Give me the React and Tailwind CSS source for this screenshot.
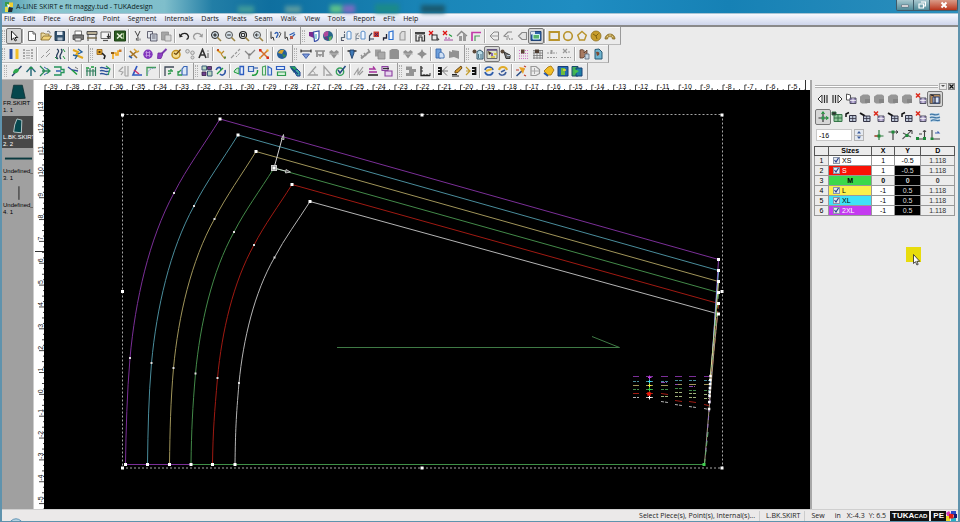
import { useState } from "react";

const GRAY = "#8e8e8e";
const BLUE = "#2f5fb3";
const GREEN = "#1d9a3c";
const GOLD = "#b8932c";

const menus = [
  "File", "Edit", "Piece", "Grading", "Point", "Segment", "Internals", "Darts",
  "Pleats", "Seam", "Walk", "View", "Tools", "Report", "eFit", "Help",
];

// Each icon is a list of [path, fill, stroke, stroke width, dash] on a 12x12 grid
const icons = {
  pointer: [["M3.5 1v9l2.2-2 1.5 3 1.3-.7L7 7.5h2.8z", "#fff", "#222", 1]],
  new: [["M2.5 1.5h4.5l2.5 2.5v6.5h-7z", "#fff", "#666", 1], ["M7 1.5v2.5h2.5", "none", "#666", 1]],
  open: [["M1 10V3h3l1 1h4v2", "#e9d9a0", "#8a6d2a", 0.8], ["M1 10l2.5-4h8l-2.5 4z", "#f1d37a", "#7d6224", 0.8], ["M7 1.5c2-1 3 0 3 2", "none", "#555", 0.8]],
  save: [["M1 1.5h9.5v9H1z", "#33536f", "#223a52", 1], ["M3 1.5h5.5v3.5H3z", "#e8eef5"], ["M3.5 7.5h5v3h-5z", "#aebdcb"]],
  print: [["M3 1h6.5v4H3z", "#fff", "#555", 0.8], ["M1 5h10.5v4.5H1z", "#777", "#444", 0.8], ["M3 8h6v3H3z", "#eee", "#555", 0.8]],
  plotter: [["M1 1.5h10v3H1z", "#b8ae94", "#444", 0.9], ["M2 4.5v6.5M10 4.5v6.5", "none", "#444", 1], ["M1 8h10", "none", "#6b5d3a", 1.3]],
  screen: [["M1 2h9.5v6.5H1z", "#f4f4f4", "#666", 1], ["M3 10.5h5", "none", "#555", 1.2], ["M8.5 3.5v4M7 6l1.5 2L10 6", "none", "#333", 1.2]],
  excel: [["M.5 1h11v10H.5z", "#2c5a22", "#1d4216", 1], ["M3 3.5l5.5 5M8.5 3.5L3 8.5", "none", "#e8f3dc", 1.5], ["M9.5 3v6", "none", "#a9cf8e", 0.8]],
  cut: [["M3 1l3 5.5M8 1L5.5 6.5", "none", "#333", 0.9], ["M6 7v4M4.5 8v2.5", "none", "#666", 1.2], ["M7.5 8.5h1v2h-1z", "#777"]],
  copy: [["M1.5 1.5h5v6.5h-5z", "#e6e9ee", "#445", 0.8], ["M4.5 4H11v7H4.5z", "#cfd5de", "#445", 0.8], ["M6 6h3.5M6 8h3.5", "none", "#445", 0.7]],
  paste: [["M1.5 2h7v8h-7z", "#a5a5a5", GRAY, 0.8], ["M5 5h6v6H5z", "#d8d8d8", GRAY, 0.8]],
  undo: [["M2.5 5.5c2-3 7-3 8 1 0 1.5-1 2.5-2 3", "none", "#222", 1.3], ["M1 3.5l.5 4 3.5-1z", "#222"]],
  redo: [["M9.5 5.5c-2-3-7-3-8 1 0 1.5 1 2.5 2 3", "none", "#999", 1.2], ["M11 3.5l-.5 4L7 6.5z", "#999"]],
  zoomIn: [["M5 1.5a3.5 3.5 0 100 7 3.5 3.5 0 000-7z", "#cdd9e2", "#222", 1], ["M5 3.2v3.6M3.2 5h3.6", "none", "#111", 1], ["M7.5 7.5L11 11", "none", "#9c8544", 1.6]],
  zoomOut: [["M5 1.5a3.5 3.5 0 100 7 3.5 3.5 0 000-7z", "#d5e0e8", "#555", 1], ["M3.2 5h3.6", "none", "#222", 1], ["M7.5 7.5L11 11", "none", "#9c8544", 1.6]],
  zoomFit: [["M5 1.5a3.5 3.5 0 100 7 3.5 3.5 0 000-7z", "#dfe3e6", "#222", 1.2], ["M3.5 3.5h3v3h-3z", "none", "#333", 1], ["M7.5 7.5L11 11", "none", "#9c8544", 1.6]],
  zoomPrev: [["M5 1.5a3.5 3.5 0 100 7 3.5 3.5 0 000-7z", "#dce5ec", "#555", 1], ["M3 5l2-1.5v3zM5 5h2", "#444", "#444", 0.6], ["M7.5 7.5L11 11", "none", "#9c8544", 1.6]],
  help: [["M1 1.5v7l2-1.5 1 3.5", "none", "#333", 1], ["M5 4c0-2 3-2 3 0S6.5 5.500 6.5 8", "none", BLUE, 1.3], ["M9 2l2 1.5-2 4", "none", "#555", 1]],
  helpTool: [["M1 1.5v7l2-1.5 1 3.5", "none", "#333", 1], ["M5.5 5l5-2.5M6 9l5-5", "none", BLUE, 1.3], ["M6 6h3v3H6z", "#b85a4a"]],
  shield: [["M1 2h5v6L1 6z", "#7b2c8f"], ["M5.5 2L11 1v6c0 2-2 4-4.5 4.5z", "#fff", "#3950a8", 1.2], ["M8 4v5", "none", "#2aa6b5", 1]],
  globe: [["M6 1a5 5 0 100 10A5 5 0 006 1z", "#26668a"], ["M1.5 4c1-3 4-3 5-2.5L6 6 2 7z", "#b0479d"], ["M2 8l3-1 1 3.500z", "#7a2c7c"], ["M7 7l3-1-1 4-2 1z", "#62b05f"]],
  pieceA: [["M7 2l2-1 2 1v7H7z", "#f1f7ff", "#5d90c8", 1], ["M1.5 10.5V7.5h3V4", "none", "#5c6b7a", 1.2], ["M4.5 1.5v1.5M1 10.5h3", "none", "#556", 1]],
  pieceB: [["M7 2l2-1 2 1v7H7z", "#f1f7ff", "#5d90c8", 1], ["M2 10.5V6l2.500-3M2 8.5h3", "none", "#7d8894", 1.1], ["M1 4h3M4 6h2", "none", "#999", 0.9]],
  pieceDel: [["M5.5 1.5H11V7H5.5z", "#c63a2e"], ["M7 3l3 3M10 3L7 6", "none", "#4b1e66", 1], ["M1.5 11V6L4 3M2 9h4", "none", "#31435a", 1.2]],
  pieceC: [["M7 2l4-1v8.500H7z", "#f5faff", "#2a6fd0", 1.2], ["M1.5 10.5V8h3V4", "none", "#222233", 1.3]],
  pieceGray: [["M4 10V4l2-2.5h3V10z", "#ddd", "#999", 1.1]],
  grade: [["M1 2h10v2.5H1z", "#444"], ["M2 5v6h3V7h3v4h2.5V5", "none", "#333", 1.2], ["M5 5.5h3", "none", "#888", 1]],
  gradeDel: [["M1 1l4 4M5 1L1 5", "none", "#d11", 1.3], ["M4 5h5v5H4z", "none", "#333", 1.1], ["M9 7l2.5 2.5-2 1.5", "#444"]],
  gradeDel2: [["M1 1l4 4M5 1L1 5", "none", "#d11", 1.3], ["M2 10h9M4 9V7M7 9V7.5", "none", "#a3489f", 1.1], ["M7 4.500l3 2", "none", GREEN, 1.2]],
  house: [["M1 6l4.5-4.5L11 6", "none", "#888", 1.4], ["M3 6h3v5H3zM7 4h3v7H7z", "#999"]],
  corner: [["M2 11V2.500h9", "none", "#c23ca8", 1.7], ["M5 11V6h5", "none", "#4a9c58", 1.2]],
  foldL: [["M10.500 2H6L2 6l4 4h4.500z", "#ececec", "#888", 1], ["M2 6h9", "none", "#999", 1]],
  foldD: [["M10 2H6L2 6l3 1", "none", "#888", 1.1], ["M4 9h2M7 8l1 2M9 9h2M6 5v3", "none", "#888", 1]],
  foldR: [["M10.5 2.500H6L2.5 6 6 9.5h4.500z", "#e4e4e4", "#888", 1.1]],
  screenGreen: [["M1 1.5h10v9H1z", "#2f62a8", "#1d4175", 1], ["M3 4.5h6.5V9H3z", "#57b26c", "#ddffff", 0.9], ["M1 1.5h4v3H1z", "#dfe6ef"]],
  rect: [["M1.500 2h9.5v8H1.5z", "none", GOLD, 1.8]],
  circle: [["M6 1.8a4.3 4.3 0 100 8.6A4.3 4.3 0 006 1.800z", "none", GOLD, 1.6]],
  pentagon: [["M6 1.5l4.3 3.6L8.5 10h-5L1.7 5.1z", "none", GOLD, 1.4]],
  ringFull: [["M6 1a5 5 0 100 10A5 5 0 006 1z", "#c79d2c", "#8e7020", 0.8], ["M3 4l3 2M8.5 3.5L6 6l1 3", "none", "#806310", 1]],
  arch: [["M1 9a5 5 0 0110 0H8.5a2.5 2.5 0 00-5 0z", "#b89a4a", "#866b22", 0.8], ["M3 6l1.5 1.5M6 4v2.5M9 6L7.5 7.5", "none", "#f0e2b0", 0.7]],

  bars: [["M1.5 1h3v10h-3z", "#2d4fa0"], ["M7.5 1h3v10h-3z", "#f4bf29"]],
  barsGray: [["M2 1v10M10 1v10", "none", "#8b8b8b", 1.4, "2 1"], ["M4 2.5h4M4 5h4M4 7.5h4M4 10h4", "none", "#aaa", 1]],
  dashLine: [["M1 10l3-3M6 5l4-4M6 9l4-4", "none", "#999", 1]],
  curves: [["M3 1c5 3-4 6 1 10M7 1c4 3-4 6 0 10", "none", "#253b5a", 1.3], ["M9 1l2 3M1 9l2 2M9 8l2 3", "none", GREEN, 1]],
  zigzag: [["M1 2l5 2-2 3 7 3", "none", "#e2a71a", 2], ["M6 1l4 3-4 2M1 7l4 1-2 3", "none", "#21609c", 1.3]],
  key: [["M1 1.5h5v5H1z", "#e6a92c", "#8d5a12", 0.8], ["M6 5l3 3-1 3", "none", "#222", 1.6], ["M2.5 3h2v2h-2z", "#553a14"]],
  nodeLine: [["M3 11V5h3v2h2V3h2", "none", "#f0a71c", 1.6], ["M9 1.5h2.5V4H9z", "#c8792a"], ["M1 4h3v2H1z", "#8a5a1c"]],
  pinX: [["M2 3l7 7M9 3L2 9", "none", "#a67525", 1.6], ["M6 1l3 3 2-1", "none", "#d8a232", 1.5], ["M1 8l3 2", "none", "#3060a8", 1.6]],
  ball: [["M6 1.5a4.7 4.7 0 100 9.400 4.7 4.7 0 000-9.4z", "#8338bd"], ["M3.5 4.5h5M3.5 7.5h5M4.5 3v6M7.5 3v6", "none", "#c79ae6", 0.8]],
  brush: [["M10.5 1L6 5.5", "none", "#7c3bb0", 2], ["M2 5h4.5v2L5 10.5H1.5z", "#8e3fc4", "#6c2a9a", 0.8]],
  clock: [["M6 2.5a4 4 0 100 8 4 4 0 000-8z", "#f3dc90", "#c4921f", 1.5], ["M6 6.5l4.5-5M4 5l2 1.5", "none", "#6b4610", 1.2]],
  gears: [["M3.5 1.5a1.8 1.8 0 100 3.6 1.8 1.8 0 000-3.6zM8.5 3a1.8 1.8 0 100 3.6A1.8 1.8 0 008.5 3zM8.5 8a1.5 1.5 0 100 3 1.5 1.5 0 000-3z", "#ddd", "#999", 1]],
  textTool: [["M1 10L4.5 1.5 8 10M2.5 7h4", "none", "#333", 1.6], ["M10 5v5M10 2.5v1", "none", "#777", 1.3]],
  joinA: [["M1 2l4 3", "none", "#e0a325", 1.6], ["M5 6l3-3M5 6l4 5", "none", "#b98a2c", 1.2], ["M1 1h2v2H1z", "#c8541f"], ["M8 8.500h2v2H8z", "#5d8a3c"]],
  joinB: [["M1 10l3-3M5 6l2-2M8 3l2-2", "none", "#999", 1.1], ["M6 9l4-4", "none", "#999", 1, "2 1"]],
  joinC: [["M1 3l4 4M6 7l5-5M5 6v5", "none", "#888", 1.2], ["M4.5 5.5h2v2h-2z", "#777"]],
  joinX: [["M2 2l8 8M10 2L2 10", "none", "#d3702a", 1.5], ["M1 1h2.5v2.5H1zM8.5 8.5H11V11H8.5z", "#d62c1e"], ["M8.5 1.5h2v2h-2zM1 9h2v2H1z", "#e5ae2f"]],
  world: [["M6 1a5 5 0 100 10A5 5 0 006 1z", "#245f9b"], ["M2 5c1-3 4-4 6-3L6 6z", "#d8a52b"], ["M6 6l4 1-2 3z", "#3b8f4f"]],
  measure: [["M1 3h10M1 1.5v3M11 1.5v3", "none", "#222", 1.1], ["M2.5 6h7L6 10.5z", "#7f9cdc", "#2e4f99", 0.8]],
  grayTee: [["M1 3h10M3 3v6M9 3v6", "none", GRAY, 1.7], ["M3 6h6L6 9z", "#999"]],
  grayHeart: [["M1 4l2.5-2L6 4l2.5-2L11 4 6 10.5z", "#929292"], ["M1 6h10", "none", "#bbb", 1]],
  dart: [["M1.5 3h9", "none", "#222", 1.4], ["M4 2h4v3L6 10.5 4 5z", "#3f7ab8", "#1f3f68", 0.9]],
  grayDart: [["M1 10.500L10 3", "none", "#949494", 2], ["M1 7l2 3M4 5l2 3M8 1l2 4", "none", "#949494", 1.4]],
  grayCopy: [["M1 1.5h6v7H1z", "#9e9e9e"], ["M4 4h7v7H4z", "#a9a9a9", "#868686", 0.8]],
  graySquare: [["M1.5 2.5L4 1h5l2 1.5V11H1.5z", "#909090"]],
  grayDia: [["M6 1l1.500 3L11 6 7.5 8 6 11 4.5 8 1 6l3.5-2z", "#8f8f8f"], ["M4 4h4v4H4z", "#8f8f8f"]],
  bluePages: [["M2 1h5v9H2z", "#6ea0dc", "#3a69ac", 0.9], ["M5 5c2-2 6 0 5 5H5z", "#cfe0f5", "#3a69ac", 0.9]],
  grayPages: [["M1 3l3 1V2l7 1v8l-5-2-5 1z", "#929292"]],
  eyePiece: [["M2.5 1.5a2 2 0 100 4 2 2 0 000-4z", "#5c4a3a"], ["M5 3.5L8 2l3 2v7H5z", "#b9dce8", "#31576a", 1], ["M6.5 6v4M9 6v4", "none", "#31576a", 0.8]],
  eyeScreen: [["M1 1.5h10v9H1z", "#dde2c4", "#6b6b6b", 1], ["M1 2h10", "none", "#5f4a86", 1.5], ["M2 3l4 2-3 2z", "#463325"], ["M5 9h4M8 6h3", "none", "#d5bf2a", 1.5], ["M6 5v3", "none", "#6c3fb0", 1.5]],
  eyePoint: [["M2.5 1.5a2 2 0 100 4 2 2 0 000-4z", "#5c4a3a"], ["M4 4l6 3v3.5H6z", "#777", "#333", 1], ["M7 7.5h3", "none", "#bbccdd", 1]],
  eyeDots: [["M1 2.5h10M1 5.5h10M1 8h10M1 10.5h10", "none", "#d275c8", 1, "1 1"], ["M3 1.5h3.5v4H3z", "#5b4536"]],
  eyeGrid: [["M1 2.5h10M1 5h10M1 7.5h10M1 10h10M2 2v9M5 2v9M8 2v9M10.5 2v9", "none", "#777", 0.8], ["M3 1.5h4V5H3z", "#4c3c30"]],
  grayDots: [["M1 5h10M1 9.5h10", "none", "#999", 1, "2 1"], ["M4.5 2h2v4h-2z", "#9a9a9a"]],
  grayX: [["M3 1l4 4M7 1L3 5", "none", "#999", 1.2], ["M1 9.5h10M9 3v3", "none", "#999", 1, "2 1"]],
  handA: [["M2 2c3-1 5 0 4 3l3-3v4l-4 4H2z", "#a87b62", "#55392b", 0.8], ["M7 6h4v5H7z", "#c3d3e0", "#556677", 0.8]],
  handB: [["M3 1.5L7 1l3 3v7H3z", "#6fb4cf", "#2a5b74", 1], ["M4 4c3-1 4 1 3 3L5 8z", "#7c4a32"]],

  leaf: [["M1 11L10.5 1", "none", "#23406a", 1.3], ["M2 8c0-4 4-5 6-4 0 3-2 5-6 4z", "#2fa64e"]],
  arrowUp: [["M6 11V2M1.5 7L6 2l4.5 5", "none", "#2b6e7c", 1.5], ["M4.5 3h3", "none", GREEN, 1.4]],
  fanR: [["M1 1l5 5-5 5M3 6h7M8 3.5L11 6 8 8.5", "none", "#2a8c5c", 1.3], ["M5 2l3 2M5 10l3-2", "none", "#3a5fb0", 1]],
  boxR: [["M1 2h7v2.5h3v3H8V10H1", "none", "#23935a", 1.3], ["M3 6h5", "none", BLUE, 1.5]],
  swipe: [["M1 2l4 3 6 1", "none", "#32499e", 1.3], ["M5 5l5 4.5", "none", GREEN, 1.5], ["M8 2l3 2", "none", "#777", 1]],
  fence: [["M2 11V4M5 11V3M8 11V4M10.5 11V2M1 6h10", "none", "#2f7d5c", 1.2], ["M1 3h3M6 2h3", "none", GREEN, 1.3]],
  flow: [["M1 3c3-2 5 2 9 0M1 6c3-2 5 2 9 0M1 9c3-2 5 2 9 0", "none", "#28509a", 1.3], ["M7 1l4 3-2 6", "none", "#32a05b", 1.2]],
  grayBend: [["M6 2L2 6l4 1-2 3M8 1v10M11 1v10H8", "none", "#a1a1a1", 1.1]],
  angle: [["M6 1L2 10h9", "none", "#2f57c0", 1.7], ["M3 5l5 4", "none", "#d0316b", 1.5]],
  cornerArc: [["M2 11V2.5h9", "none", "#3d9a55", 1.3], ["M2.5 9C3 5 6 3 10 3", "none", "#7892c8", 1, "1.5 1"]],
  cornerDot: [["M2 11V2h9", "none", "#3f4a58", 1.3], ["M5 6h5M5 9l3-1M8 4v2", "none", "#2f9a4e", 1.4]],
  body: [["M5 4l2-2.500h3V10H5z", "#dbe8f8", "#3965b5", 1.2], ["M1 8l3-3M1 6v4h4", "none", "#2f9a4e", 1.3]],
  grid4: [["M1 1h4.5v4H1zM6.5 6H11v5H6.5z", "#b9d8c0", "#3b5b7a", 1], ["M6.5 1.5h4v3h-4zM1 7h4v3.5H1z", "#6e3f8e", "#332244", 0.8]],
  loop: [["M1 5c2-4 5-3 5 0M5 9c3 3 6-1 5-4", "none", "#2b54a5", 1.6], ["M2 9l6-6", "none", GREEN, 1.3]],
  swapA: [["M1 7c1-3 3-4 5-4v6z", "#c6e6d1", GREEN, 1], ["M7 1.5h3.5v8H7z", "#e3edfb", "#2d5dc0", 1.3]],
  swapB: [["M1.5 1.5h5v5h-5z", "#d8e5f6", "#3563b3", 1.2], ["M5 10c3 1 6-1 5.5-5", "none", GREEN, 1.5], ["M7 3h4", "none", "#3563b3", 1.2]],
  twoPieces: [["M1.5 2l3-1v9h-3z", "#e2f3e6", "#4aa25b", 1.1], ["M7 1.500l3.5 2V10H7z", "#e3edfb", "#3565bf", 1.2]],
  layers: [["M1.5 1.5h8v3h-8z", "#dce9fa", "#2c5cc0", 1.2], ["M2.5 7h8v3.5h-8z", "#d3efd9", "#2f9a4e", 1.2]],
  greenTag: [["M1 1.5h5l2 3-3 3z", "#27a35c", "#155c79", 0.8], ["M5 6l3-2 3 3v4H8z", "#3fa6a0", "#1b3f8d", 1], ["M2 3l7 6", "none", "#1b3f8d", 1.2]],
  grayAngle: [["M9 1.5L1.5 10H11", "none", "#a1a1a1", 1.3], ["M5 6c2 0 3 2 3 4", "none", "#a1a1a1", 1]],
  grayTri: [["M3 11V1.5L10.5 10H5", "none", "#a1a1a1", 1.3]],
  compass: [["M5 3a3.7 3.7 0 100 7.4A3.7 3.7 0 005 3z", "none", "#38a05b", 1.4], ["M3 5l2 3 5.5-7", "none", "#224a80", 1.5]],
  grayZig: [["M1 10l4-6v5l5-7M6 10l4-4", "none", "#9a9a9a", 1.1]],
  slide: [["M2 4h6L6 1.5M10 7H2", "none", "#a5309d", 1.3], ["M1 10h10", "none", "#222", 1.5]],
  stackPurple: [["M1 1.5h6v4H1zM4 6h7v5H4z", "#e7d5ee", "#8b3fa0", 1.1], ["M2 3.5h6", "none", "#333", 1.4]],
  grayBlocks: [["M1 1.5h6V4h4v3H9v4H1V8h3V5H1z", "#949494"]],
  axis: [["M2 1v9.5h9", "none", "#222", 1.3], ["M2 3h2M2 6h2M5 9v1M8 9v1M11 8v3", "none", "#333", 1]],
  bugA: [["M1 3h3v6H1M1 6h3", "none", "#111", 1.8], ["M10 1.500L5.5 6l4.500 4.500M5 6h6", "none", "#777", 1]],
  pen: [["M10 1L4 6v2l3-.5L11 3z", "#d59a2a", "#5b3c10", 0.9], ["M1 9.5h5M1 11h7", "none", "#222", 1]],
  bugB: [["M7 3h3.5v6H7M7 6h3.5", "none", "#111", 1.8], ["M1 2l4 4-4 4M1 6h4", "none", "#c39b2a", 1.2]],
  rotA: [["M2 5c1-4 7-4 8 0M10 7c-1 4-7 4-8 0", "none", "#2e5dab", 1.7], ["M3 6l6-2", "none", "#e8b730", 2]],
  rotB: [["M2 5c1-4 7-4 8 0", "none", "#e0aa28", 2], ["M9 7c-1 4-6 4-7 1M4 7l4-2", "none", "#3c5c9a", 1.5]],
  wand: [["M1.5 11L9 4", "none", "#2c4e86", 1.6], ["M4 2l6 1-2 6z", "#eaa329"], ["M9 1l2 1M1 5h3M9 10l2 1", "none", "#c13a2b", 1.2]],
  grayD: [["M2 1.5h5l3.5 3v4l-3.500 2H2z", "none", "#999", 1.2], ["M2 6h8M5.5 3v6", "none", "#aaa", 1]],
  tagGold: [["M5 2l3-1 3 4-3 5H5L1 6z", "#f1bd26", "#a9780e", 0.9], ["M1 8l4 3", "none", "#2759a8", 1.6]],
  mapA: [["M1 1.5h10V11H1z", "#2468b4", "#173f77", 1], ["M4 3h4v7H4z", "#6cbb3d"], ["M6 5h3", "none", "#f0d638", 1.5]],
  mapB: [["M1 1.5h6V11H1z", "#3fae5a", "#174a6b", 1], ["M5 3h6v8H5z", "#1f7ea6", "#173f77", 1], ["M3 4l5 2-4 3z", "#46c04c"]],

  navPrev: [["M5 2v8L1 6z", "#fff", "#333", 1], ["M7.5 2v8M10 2v8", "none", "#333", 1.2]],
  navNext: [["M7 2v8l4-4z", "#fff", "#333", 1], ["M2 2v8M4.5 2v8", "none", "#333", 1.2]],
  tableCopy: [["M1.5 1l4 1v5h-4z", "#fff", "#555", 1], ["M5 5h6v5.5H5z", "#9d8fc0", "#444455", 0.9], ["M5 7.5h6M8 5v5", "none", "#fff", 0.7]],
  drum: [["M1 3.5l3-2h5L11 3v5l-3 2.5H3L1 9z", "#969696"], ["M6 6h5v4H6z", "#858585"]],
  tableDel: [["M1 .5l4 4M5 .5l-4 4", "none", "#dc2a1c", 1.5], ["M5 5h6v5.5H5z", "#a99cc8", "#444455", 0.9], ["M5 7.5h6M8 5v5", "none", "#fff", 0.7]],
  tableScreen: [["M1 1.5h10v9H1z", "#b58a5a", "#555", 1], ["M4 4h6v6H4z", "#d9e4f4", "#2f477c", 1], ["M2 2l3 1M6 4v6", "none", "#222233", 1.2]],
  cross: [["M6 1v10M1.5 7h9", "none", "#333", 1.2], ["M4.5 3L6 1l1.5 2M9 5.5L11 7 9 8.5", "none", GREEN, 1.2], ["M4.5 5.5h3v3h-3z", "#2f9a4e"]],
  gridGreen: [["M3 3.5h8v7H3z", "#8fc79a", "#37774a", 1], ["M3 7h8M7 3.5v7M1 1h4v3H1z", "#333", "#2c6a42", 0.9]],
  tableEdit: [["M1 6V3l3-1.5", "none", "#111", 1.5], ["M4.5 4.5H11v6H4.5z", "#c0c9da", "#333344", 1], ["M4.5 7.5H11M7.7 4.5v6", "none", "#333344", 0.8]],
  tableDark: [["M1 2l5 3", "none", "#111", 2], ["M4.5 5H11v5.5H4.5z", "#c0c9da", "#333344", 1], ["M4.5 7.5H11M7.7 5v5", "none", "#333344", 0.8]],
  waves: [["M1 2h10v9H1z", "#c9dcea"], ["M1 4c2-3 4 2 9-1M1 7c2-3 5 2 10-1M2 10c3-3 5 1 9-1", "none", "#3f77a6", 1.2]],
  axUp: [["M6 1v10M1.5 7h9", "none", "#2c7a3c", 1.2], ["M1.5 7H6", "none", "#c8302a", 1.2], ["M4.5 5.5h3v3h-3z", "#1f8a39"]],
  axTee: [["M1.5 3h9M6 3v8", "none", "#444", 1.2], ["M4.5 1.5h3v3h-3z", "#1f8a39"], ["M9 1.5L11 3 9 4.5", "none", "#333", 1]],
  axDiag: [["M1.5 10L10 2M2 4l8 4", "none", "#555", 1.1], ["M7 1.5h4V5", "none", "#333", 1], ["M4.5 5h3v3h-3z", "#1f8a39"]],
  axL: [["M2 10h9M9.5 2v8M4 5h3", "none", "#444", 1.1], ["M1 8h3v3H1zM8 8h3v3H8z", "#1f8a39"], ["M8 3l1.500-2L11 3", "none", "#444", 1]],
  axR: [["M3 1v9h8", "none", "#444", 1.1], ["M6 4h4L8.5 2.5", "none", "#3a5fb0", 1.1], ["M1.5 8.5h3V11h-3z", "#1f8a39"]],
};

// rows > bands > groups; a "*" marks the pressed button
const toolbars = [
  [
    ["*pointer", "new open save", "print plotter screen excel", "cut copy paste", "undo redo", "zoomIn zoomOut zoomFit zoomPrev", "help helpTool"],
    ["shield globe", "pieceA pieceB pieceDel pieceC pieceGray", "grade gradeDel gradeDel2 house corner", "foldL foldD foldR *screenGreen", "rect circle pentagon ringFull arch"],
  ],
  [
    ["bars barsGray", "dashLine curves", "zigzag"],
    ["key nodeLine", "pinX ball brush clock gears textTool", "joinA joinB joinC joinX", "world"],
    ["measure grayTee grayHeart", "dart grayDart grayCopy graySquare grayHeart grayDia", "bluePages grayPages"],
    ["eyePiece *eyeScreen eyePoint", "eyeDots eyeGrid grayDots grayX", "handA handB"],
  ],
  [
    ["leaf arrowUp fanR boxR swipe", "fence flow", "grayBend angle cornerArc", "cornerDot body"],
    ["grid4 loop", "swapA swapB twoPieces layers greenTag", "grayAngle grayTri compass", "grayZig slide stackPurple"],
    ["grayBlocks axis", "bugA pen bugB", "rotA rotB", "wand grayD tagGold mapA mapB"],
  ],
];

const panelTools = [
  "navPrev navNext tableCopy drum drum drum drum tableDel *tableScreen",
  "*cross gridGreen tableEdit tableDark tableDel tableDark tableEdit tableDel waves",
];

const sizes = [
  { name: "XS", x: "1", y: "-0.5", d: "1.118", cell: "bg-white text-black" },
  { name: "S", x: "1", y: "-0.5", d: "1.118", cell: "bg-[#f91205] text-white" },
  { name: "M", x: "0", y: "0", d: "0", cell: "bg-[#3bd84b] text-black", base: true },
  { name: "L", x: "-1", y: "0.5", d: "1.118", cell: "bg-[#fbf04a] text-black" },
  { name: "XL", x: "-1", y: "0.5", d: "1.118", cell: "bg-[#3fe2f7] text-black" },
  { name: "2XL", x: "-1", y: "0.5", d: "1.118", cell: "bg-[#c43bf0] text-white" },
];

// Graded outlines: waist corner, two curve points, hem corner, side seam end
const outlines = [
  { color: "#7b2f98", pts: [[220, 119], [174, 193], [130, 358], [125.5, 464]], end: 259.5 },
  { color: "#4a8d9c", pts: [[238, 135], [194, 206], [151.5, 363], [147.5, 464]], end: 270.5 },
  { color: "#a0955a", pts: [[256, 151.5], [214.5, 219], [173.5, 368], [169.5, 464]], end: 281.5 },
  { color: "#438a49", pts: [[274, 168], [234, 232], [195.5, 373.5], [191, 464]], end: 292.5 },
  { color: "#a01a12", pts: [[292, 184.5], [254, 245], [217.5, 378], [212.5, 464]], end: 303.5 },
  { color: "#b4b4b4", pts: [[310, 201.5], [274.5, 257.5], [239, 383], [235, 464]], end: 314 },
];

const dartColumns = [
  { x: 633, w: 6, ys: [376, 381, 385, 389, 393, 397] },
  { x: 646, w: 7, ys: [376, 381, 385, 389, 393, 397] },
  { x: 661, w: 7, ys: [376, 381, 385, 389, 393, 401] },
  { x: 675, w: 7, ys: [376, 380, 384, 388, 400, 404] },
  { x: 689, w: 7, ys: [376, 380, 384, 390, 401, 406] },
  { x: 704, w: 5, ys: [376, 380, 384, 390, 404, 408] },
];

function Icon({ name }) {
  return (
    <svg viewBox="0 0 12 12" className="size-3" aria-hidden="true">
      {icons[name].map(([d, fill, stroke, width, dash], i) => (
        <path key={i} d={d} fill={fill} stroke={stroke} strokeWidth={width} strokeDasharray={dash} />
      ))}
    </svg>
  );
}

function ToolButton({ name }) {
  const pressed = name.startsWith("*");
  const icon = pressed ? name.slice(1) : name;
  return (
    <button
      aria-label={icon}
      className={`flex h-3.5 w-3.5 items-center justify-center ${
        pressed ? "rounded-[1px] bg-[#d6d6d6] outline outline-[#777777]" : ""
      }`}
    >
      <Icon name={icon} />
    </button>
  );
}

function Toolbar({ bands, wide }) {
  return (
    <div className="flex">
      {bands.map((groups, i) => (
        <div key={i} className="flex items-center border-r border-b border-r-[#9a9a9a] border-b-[#b9b9b9] pr-[3px] shadow-[inset_0_1px_0_#f8f8f8]">
          <span className={`flex ${i > 0 ? "w-1.5 pl-px" : wide ? "w-2 pl-0.5" : "w-[5px]"}`}>
            <span className="h-3 w-[3px] border-x border-dotted border-[#b0b0b0]" />
          </span>
          {groups.map((group, j) => (
            <div key={j} className="flex items-center">
              {j > 0 && <span className="mx-px h-3.5 w-0.5 border-r border-l border-l-[#a8a8a8] border-r-white" />}
              {group.split(" ").map((name, k) => (
                <ToolButton key={k} name={name} />
              ))}
            </div>
          ))}
        </div>
      ))}
    </div>
  );
}

function HorizontalRuler() {
  return (
    <svg className="h-2.5 w-full shrink-0 bg-white" fontFamily="Liberation Sans, sans-serif" fontSize="7">
      {Array.from({ length: 35 }, (_, i) => {
        const x = 11 + i * 21.87;
        return (
          <g key={i}>
            <path d={`M${x} 10V5h2M${x + 5.5} 9v1M${x + 11} 8v2M${x + 16.5} 9v1`} fill="none" stroke="#444" strokeWidth="1" />
            <text x={x + 2.5} y="8.5" fill="#111">{i - 39}</text>
          </g>
        );
      })}
      <path d="M771.5 0v10" stroke="#333" />
    </svg>
  );
}

function VerticalRuler() {
  return (
    <svg className="h-full w-2.5 shrink-0 bg-white" fontFamily="Liberation Sans, sans-serif" fontSize="7">
      {Array.from({ length: 19 }, (_, i) => {
        const y = 20.3 + i * 21.85;
        return (
          <g key={i}>
            <path d={`M10 ${y}H5M9 ${y + 5.5}h1M8 ${y + 11}h2M9 ${y + 16.5}h1`} fill="none" stroke="#444" strokeWidth="1" />
            <text transform={`translate(8.5 ${y - 1}) rotate(-90)`} fill="#111">{13 - i}</text>
          </g>
        );
      })}
      <path d="M1 161.5h9" stroke="#333" />
    </svg>
  );
}

function curve([a, b, c, d]) {
  const ab = [b[0] - a[0], b[1] - a[1]];
  const bc = [c[0] - b[0], c[1] - b[1]];
  return `M${a} C${a[0] + ab[0] * 0.35},${a[1] + ab[1] * 0.35} ${b[0] - ab[0] * 0.28},${b[1] - ab[1] * 0.34}
    ${b} C${b[0] + bc[0] * 0.57},${b[1] + bc[1] * 0.28} ${c[0] - bc[0] * 0.12},${c[1] - bc[1] * 0.35}
    ${c} C${c[0] - 3},${c[1] + 35} ${d[0] + 0.5},${d[1] - 34} ${d}`;
}

function Handle({ x, y, size = 3, fill = "#fff" }) {
  return <rect x={x - size / 2} y={y - size / 2} width={size} height={size} fill={fill} />;
}

function PatternCanvas() {
  return (
    <svg className="h-full min-w-0 flex-1 bg-black">
      <g transform="translate(-44 -90)" fill="none">
        <rect x="122.5" y="114.5" width="600" height="353.5" stroke="#a5a5a5" strokeDasharray="2 2" />

        {outlines.map(({ color, pts, end }) => (
          <g key={color} stroke={color}>
            <path d={curve(pts)} />
            <path d={`M${pts[0]}L718.5 ${end}`} />
          </g>
        ))}

        {/* hem */}
        <path d="M125 464.5h66" stroke="#7b2f98" />
        <path d="M191 464.5h513" stroke="#3f8f47" />

        {/* centre back, all sizes nearly overlap */}
        <path d="M718.5 260L716 300 709.5 400" stroke="#8a45b0" />
        <path d="M718.5 271L715.5 310 709.5 395" stroke="#7fb8e6" />
        <path d="M718.5 282L714.5 330 710 380" stroke="#d8d48a" />
        <path d="M718.5 293L716 320 711 378" stroke="#62b068" strokeDasharray="6 3" />
        <path d="M718.5 304L715 340 711 380" stroke="#b0401c" strokeDasharray="5 2" />
        <path d="M717.5 315L714 350 704.5 464" stroke="#a89c84" />
        <path d="M710 400L705.5 455" stroke="#8f6bc0" strokeDasharray="4 4" />
        <path d="M708 432L704.5 464" stroke="#62b068" strokeDasharray="5 4" />

        {/* grain line */}
        <path d="M337 347.5h282.5L592 336.5" stroke="#3f7a45" />

        {/* dart notches */}
        {dartColumns.map((col) =>
          col.ys.map((y, i) => (
            <path
              key={`${col.x}-${i}`}
              d={`M${col.x} ${y + 0.5}l${col.w} ${col.x > 650 && i > 3 ? 1 : 0}`}
              stroke={outlines[i].color}
              strokeDasharray={i % 2 ? "3 1" : undefined}
            />
          ))
        )}
        <path d="M661 396.5h7M675 392.5h7M675 396.5h7M689 393.5h7M689 397.5h7M704 394.5h5M704 398.5h5" stroke="#9fb07a" strokeDasharray="3 1" />
        <path d="M661 382.5h6M675 384.500h3M689 386.5h6" stroke="#8a45b0" strokeDasharray="4 1" />
        {["#c03be0", "#3fd8ee", "#f4ee3a", "#33d04a", "#f01808", "#fff"].map((c, i) => (
          <path key={c} d={`M649.5 ${375.5 + i * 4}v4M648 ${377.5 + i * 4}h3.5`} stroke={c} />
        ))}
        <Handle x={649} y={394} size={3.5} fill="#f01808" />

        {outlines.map(({ color, pts, end }) => (
          <g key={color}>
            <Handle x={pts[0][0]} y={pts[0][1]} />
            <Handle x={pts[1][0]} y={pts[1][1]} size={2} fill="#ddd" />
            <Handle x={pts[2][0]} y={pts[2][1]} size={2} fill="#ddd" />
            <Handle x={pts[3][0]} y={464.5} />
            <Handle x={718.5} y={end} />
          </g>
        ))}
        {[376, 380, 384, 388, 392, 396, 402, 409].map((y, i) => (
          <Handle key={y} x={710.5 - i * 0.2} y={y} size={2.5} />
        ))}
        <Handle x={704} y={464.5} fill="#3fd04f" />

        {/* selection box */}
        {[[122.5, 115], [422, 115], [722, 115], [122.5, 291.5], [722, 291.5], [122.5, 468], [422, 468], [722, 468]].map(([x, y]) => (
          <Handle key={`${x}-${y}`} x={x} y={y} />
        ))}

        {/* grading axes of the active point */}
        <path d="M274 168l8.5-31M274 168l15 4" stroke="#cfcfcf" />
        <path d="M281.5 139l2-4.5.5 5zM286 169.5l4.5 2.5-5 1z" fill="#555" stroke="#ddd" strokeWidth="0.8" />
        <rect x="271.5" y="165.5" width="5" height="5" fill="#777" stroke="#ccc" />
        <Handle x={274} y={168} />
      </g>
    </svg>
  );
}

function PieceList() {
  return (
    <aside className="w-8 shrink-0 overflow-hidden border-r border-[#cccccc] bg-[#a0a0a0] text-[6px] leading-[7px] text-black">
      <button className="block w-full px-px pt-1 pb-0.5 text-left">
        <svg viewBox="0 0 30 16" className="block h-4 w-full">
          <path d="M11 1h9l3 13.5q-8 1-14.5-.5z" fill="#06474d" stroke="#0b2c30" strokeWidth="0.8" />
        </svg>
        FR.SKIRT
        <br />
        1. 1
      </button>
      <button className="block w-full bg-[#484848] px-px pt-0.5 text-left text-white">
        <svg viewBox="0 0 30 16" className="block h-4 w-full">
          <path d="M14.5.7l5 1.3-.5 13-8-.8q.5-8 3.5-13.5z" fill="#06474d" stroke="#d8e8e8" strokeWidth="0.8" />
        </svg>
        L.BK.SKIRT
        <br />
        2. 2
      </button>
      <button className="block w-full px-px pt-1 text-left">
        <svg viewBox="0 0 30 16" className="block h-4 w-full">
          <path d="M2 6.5h28" stroke="#0b3a3f" strokeWidth="2" />
        </svg>
        Undefined_
        <br />
        3. 1
      </button>
      <button className="block w-full px-px pt-1 text-left">
        <svg viewBox="0 0 30 16" className="block h-4 w-full">
          <path d="M16.5 0v14" stroke="#222" strokeWidth="1" />
        </svg>
        Undefined_
        <br />
        4. 1
      </button>
    </aside>
  );
}

function SizeTable() {
  return (
    <table className="mt-1 h-[70px] w-full border-collapse border border-[#777777] text-center text-[7px] leading-[8px]">
      <thead>
        <tr className="bg-[#ececec] font-bold text-black [&>th]:border [&>th]:border-[#555555] [&>th]:p-0">
          <th className="w-[10%]" aria-label="Row" />
          <th className="w-[31%]">Sizes</th>
          <th className="w-[16%]">X</th>
          <th className="w-[19%]">Y</th>
          <th className="w-[24%]">D</th>
        </tr>
      </thead>
      <tbody>
        {sizes.map((s, i) => (
          <tr key={s.name} className={`[&>td]:border [&>td]:border-[#999999] [&>td]:p-0 ${s.base ? "font-bold" : ""}`}>
            <td className="bg-[#ececec] font-normal">{i + 1}</td>
            <td className={s.cell}>
              {s.base ? (
                s.name
              ) : (
                <label className="flex items-center gap-0.5 pl-1">
                  <span className="relative flex">
                    <input type="checkbox" defaultChecked className="peer size-[7px] appearance-none border border-[#8a96a8] bg-[#e4e8f0]" />
                    <svg viewBox="0 0 7 7" className="pointer-events-none absolute inset-0 hidden size-[7px] peer-checked:block">
                      <path d="M1.5 3L3 5l2.5-4" fill="none" stroke="#27408b" strokeWidth="1.2" />
                    </svg>
                  </span>
                  {s.name}
                </label>
              )}
            </td>
            <td className={s.base ? "bg-[#ececec]" : "bg-white"}>{s.x}</td>
            <td className={i === 0 ? "bg-white" : "bg-black text-[#dddddd]"}>{s.y}</td>
            <td className="bg-[#ececec] text-[#333333]">{s.d}</td>
          </tr>
        ))}
      </tbody>
    </table>
  );
}

function GradingPanel() {
  const [value, setValue] = useState("-16");

  return (
    <aside className="relative w-[148px] shrink-0 border-l-2 border-[#a8a8a8] bg-[#ebebeb] pr-[3px] pl-0.5">
      <div className="flex h-3 items-center gap-px pl-px">
        <span className="h-[3px] flex-1 border-y border-[#b0b0b0] bg-white" />
        <button aria-label="Dock" className="grid h-[7px] w-2 place-items-center border border-[#aaaaaa]">
          <svg viewBox="0 0 4 3" className="h-[3px] w-1"><path d="M0 0h4L2 2z" fill="#555" /></svg>
        </button>
        <button aria-label="Close" className="grid h-[7px] w-[7px] place-items-center border border-[#888888] bg-[#d5d5d5]">
          <svg viewBox="0 0 5 5" className="size-[5px]"><path d="M.5.5l4 4M4.5.5l-4 4" stroke="#111" strokeWidth="1.2" /></svg>
        </button>
      </div>

      <div className="flex flex-col gap-1 pl-0.5">
        {panelTools.map((row) => (
          <div key={row} className="flex">
            {row.split(" ").map((name, i) => (
              <ToolButton key={i} name={name} />
            ))}
          </div>
        ))}
        <div className="flex items-center">
          <input
            aria-label="Angle"
            value={value}
            onChange={(e) => setValue(e.target.value)}
            className="h-3 w-9 border border-[#c8c8c8] bg-white px-0.5 text-[7px]"
          />
          <span className="mx-0.5 flex h-3 w-2.5 flex-col border border-[#b5b5b5] bg-[#e4e9f0]">
            <button aria-label="Increase" className="grid flex-1 place-items-center border-b border-[#b5b5b5]" onClick={() => setValue(String(Number(value) + 1))}>
              <svg viewBox="0 0 4 3" className="h-[3px] w-1"><path d="M0 2.5h4L2 0z" fill="#3a5a9a" /></svg>
            </button>
            <button aria-label="Decrease" className="grid flex-1 place-items-center" onClick={() => setValue(String(Number(value) - 1))}>
              <svg viewBox="0 0 4 3" className="h-[3px] w-1"><path d="M0 .5h4L2 3z" fill="#3a5a9a" /></svg>
            </button>
          </span>
          <span className="flex pl-1.5">
            {["axUp", "axTee", "axDiag", "axL", "axR"].map((name) => (
              <ToolButton key={name} name={name} />
            ))}
          </span>
        </div>
      </div>

      <SizeTable />

      {/* click highlight with the mouse pointer */}
      <div className="absolute top-[167px] left-[94px] h-[15px] w-[15px] bg-[#e8dc0c]">
        <svg viewBox="0 0 8 12" className="absolute top-[7px] left-[7px] h-3 w-2">
          <path d="M.5.5v9l2-1.8 1.4 3.3 1.3-.6-1.4-3.1h2.9z" fill="#fff" stroke="#222" strokeWidth="0.8" />
        </svg>
      </div>
    </aside>
  );
}

function TitleBar() {
  return (
    <header className="flex h-[13px] items-center bg-[linear-gradient(90deg,#4f9db0_0%,#8cc6cf_4%,#84c2cd_12%,#7fbecb_17%,#227ea6_22%,#0f6f9f_28%,#1a86b8_45%,#1f8dc2_60%,#1681b5_76%,#2c8fbd_100%)] pl-0.5">
      <svg viewBox="0 0 10 12" className="h-3 w-2.5">
        <path d="M1 1h4v4H1z" fill="#3a9a4a" />
        <path d="M5 1.5h4V6H5z" fill="#f0d030" />
        <path d="M1 6h3v5H1z" fill="#e6e04a" />
        <path d="M5 6l4 1-1 4H4z" fill="#222b33" />
        <path d="M3 3l3 1-2 3z" fill="#fff" />
      </svg>
      <h1 className="pl-0.5 text-[7px] leading-3 whitespace-nowrap text-[#0c1a22]">A-LINE SKIRT e fit maggy.tud - TUKAdesign</h1>
      {/* desktop icons seen through the glass */}
      <svg viewBox="0 0 230 13" className="ml-20 h-[13px] w-[230px] blur-[2px]">
        <path d="M5 6h16v7H5z" fill="#3f9a9a" />
        <path d="M52 6h16v7H52z" fill="#5a9aa0" />
        <path d="M97 5h12v8H97z" fill="#5cc08a" />
        <path d="M110 5h12v8h-12z" fill="#7a6cc0" />
        <path d="M142 4h24v9h-24z" fill="#1b8a8a" />
        <path d="M188 5h24v8h-24z" fill="#1a5a70" />
      </svg>
      <div className="ml-auto flex h-[11px] self-start overflow-hidden rounded-b-xs border border-t-0 border-[#3f5a68]">
        <button aria-label="Minimize" className="grid w-[17px] place-items-center border-r border-[#3f5a68] bg-linear-to-b from-[#a9c8d0] to-[#4f8a98]">
          <svg viewBox="0 0 8 6" className="h-1.5 w-2"><path d="M.5 3h7v2h-7z" fill="#fff" stroke="#444455" strokeWidth="0.5" /></svg>
        </button>
        <button aria-label="Restore" className="grid w-4 place-items-center border-r border-[#3f5a68] bg-linear-to-b from-[#a9c8d0] to-[#4f8a98]">
          <svg viewBox="0 0 8 8" className="size-2"><path d="M3 1h4.5v4H6M1 3h4.5v4H1z" fill="none" stroke="#fff" strokeWidth="1.2" /></svg>
        </button>
        <button aria-label="Close" className="grid w-[27px] place-items-center bg-linear-to-b from-[#d99a88] to-[#b83218]">
          <svg viewBox="0 0 8 8" className="size-2"><path d="M1.5 1.5l5 5M6.5 1.5l-5 5" stroke="#fff" strokeWidth="2" /></svg>
        </button>
      </div>
    </header>
  );
}

function StatusBar() {
  return (
    <footer className="relative flex h-3 shrink-0 items-center justify-end border-t border-[#cfcfcf] bg-[#ebe9e9] text-[7px] leading-[10px] text-[#222222]">
      <span className="pr-1">Select Piece(s), Point(s), Internal(s)...</span>
      <span className="border-l border-[#cccccc] pr-1 pl-1.5">L.BK.SKIRT</span>
      <span className="border-l border-[#cccccc] pr-2.5 pl-1.5">Sew</span>
      <span className="pr-1.5">in</span>
      <span className="pr-1">X:-4.3</span>
      <span className="pr-1">Y: 6.5</span>
      <span className="flex h-2.5 items-center bg-[#111111] px-0.5 font-['Liberation_Sans',sans-serif] text-[8px] font-bold text-white">
        TUKA<span className="text-[6px]">CAD</span>
      </span>
      <span className="ml-0.5 flex h-2.5 items-center bg-[#111111] px-0.5 font-['Liberation_Sans',sans-serif] text-[8px] font-bold text-white">PE</span>
      <svg viewBox="0 0 11 10" className="mr-px h-2.5 w-[11px]">
        <path d="M0 2l3-2 2 3-3 3z" fill="#d838b8" />
        <path d="M5 0h5v4H5z" fill="#2b49c8" />
        <path d="M0 5h4v5H0z" fill="#e8d82a" />
        <path d="M5 6h5v4H5z" fill="#23b0c8" />
        <path d="M3 3h4.5v4.5H3z" fill="#e01c14" />
        <path d="M8 3h3v4H8z" fill="#191970" />
      </svg>
      <svg viewBox="0 0 16 4" className="absolute bottom-0 left-1.5 h-[3px] w-4">
        <path d="M1 4q7-6 14 0" fill="#b9d3e2" stroke="#3f7fa8" />
      </svg>
    </footer>
  );
}

export default function App() {
  return (
    <div className="flex h-screen flex-col overflow-hidden border-x-2 border-b border-[#5f93ad] bg-[#ebebeb] font-['Open_Sans','Noto_Sans',sans-serif]">
      <TitleBar />
      <nav className="flex h-3.5 items-center gap-2 border-t border-b-2 border-t-[#a9c4d4] border-b-[#8a8a8a] bg-linear-to-b from-[#f6f8fd] to-[#cfd6ec] pl-0.5 text-[7px] text-[#151515]">
        {menus.map((m) => (
          <button key={m}>{m}</button>
        ))}
      </nav>

      <div className="flex flex-col">
        {toolbars.map((bands, i) => (
          <div key={i} className={`flex items-stretch ${i === 2 ? "h-[17px]" : "h-[18px]"}`}>
            <Toolbar bands={bands} wide={i === 2} />
          </div>
        ))}
      </div>

      <main className="flex min-h-0 flex-1 font-['Liberation_Sans',sans-serif]">
        <PieceList />
        <div className="flex min-w-0 flex-1 flex-col">
          <HorizontalRuler />
          <div className="flex min-h-0 flex-1">
            <VerticalRuler />
            <PatternCanvas />
          </div>
        </div>
        <GradingPanel />
      </main>
      <StatusBar />
    </div>
  );
}
